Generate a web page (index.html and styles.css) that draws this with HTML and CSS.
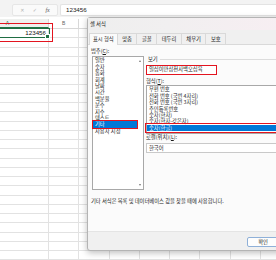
FILE: index.html
```html
<!DOCTYPE html>
<html>
<head>
    <meta charset="utf-8">
    <title>셀 서식</title>
    <link rel="stylesheet" href="styles.css">
</head>
<body>
    <div class="formula-bar">
        <div class="fx-tools">
            <span class="tool">✕</span>
            <span class="tool">✓</span>
            <span class="tool fx">fx</span>
        </div>
        <div class="formula-input">123456</div>
    </div>

    <div class="grid" id="grid">
        <div class="row head">
            <div class="cell col-a active-col">A</div>
            <div class="cell">B</div>
            <div class="cell">C</div>
            <div class="cell">D</div>
            <div class="cell">E</div>
            <div class="cell">F</div>
            <div class="cell">G</div>
            <div class="cell">H</div>
            <div class="cell">I</div>
        </div>
        <div class="row">
            <div class="cell col-a selected">123456<span class="handle"></span></div>
            <div class="cell"></div>
            <div class="cell"></div>
            <div class="cell"></div>
            <div class="cell"></div>
            <div class="cell"></div>
            <div class="cell"></div>
            <div class="cell"></div>
            <div class="cell"></div>
        </div>
    </div>

    <div class="dialog">
        <div class="title-bar">셀 서식</div>
        <div class="tabs">
            <span class="tab active">표시 형식</span>
            <span class="tab">맞춤</span>
            <span class="tab">글꼴</span>
            <span class="tab">테두리</span>
            <span class="tab">채우기</span>
            <span class="tab">보호</span>
        </div>
        <div class="panel">
            <div class="columns">
                <div class="category">
                    <div class="label">범주(<u>C</u>):</div>
                    <div class="listbox cat-list">
                        <ul class="items">
                            <li>일반</li>
                            <li>숫자</li>
                            <li>통화</li>
                            <li>회계</li>
                            <li>날짜</li>
                            <li>시간</li>
                            <li>백분율</li>
                            <li>분수</li>
                            <li>지수</li>
                            <li>텍스트</li>
                            <li class="picked">기타</li>
                            <li>사용자 지정</li>
                        </ul>
                        <div class="scrollbar">
                            <span class="arrow up"></span>
                            <span class="arrow down"></span>
                        </div>
                    </div>
                </div>
                <div class="options">
                    <div class="group-label"><span>보기</span></div>
                    <div class="sample">일십이만삼천사백오십육</div>
                    <div class="label">형식(<u>T</u>):</div>
                    <div class="listbox fmt-list">
                        <ul class="items">
                            <li>우편 번호</li>
                            <li>전화 번호 (국번 4자리)</li>
                            <li>전화 번호 (국번 3자리)</li>
                            <li>주민등록번호</li>
                            <li>숫자(한자)</li>
                            <li>숫자(한자-갖은자)</li>
                            <li class="picked">숫자(한글)</li>
                        </ul>
                    </div>
                    <div class="label">로캘(위치)(<u>L</u>):</div>
                    <div class="select">한국어</div>
                </div>
            </div>
            <p class="note">기타 서식은 목록 및 데이터베이스 값을 찾을 때에 사용합니다.</p>
        </div>
        <div class="footer">
            <button class="btn">확인</button>
        </div>
    </div>

    <script>
        // empty sheet rows below row 1
        const grid = document.getElementById('grid');
        for (let r = 0; r < 24; r++) {
            const row = document.createElement('div');
            row.className = 'row';
            for (let c = 0; c < 9; c++) {
                const cell = document.createElement('div');
                cell.className = c === 0 ? 'cell col-a' : 'cell';
                row.appendChild(cell);
            }
            grid.appendChild(row);
        }
    </script>
</body>
</html>
```

FILE: styles.css
```css
body {
    margin: 0;
    width: 276px;
    height: 260px;
    overflow: hidden;
    position: relative;
    background: #fff;
    font-family: "Noto Sans CJK KR", "Noto Sans", sans-serif;
}

/* formula bar */
.formula-bar {
    height: 17px;
    box-sizing: border-box;
    padding: 4px 0 1px 12px;
    background: #f3f3f3;
    display: flex;
    gap: 2px;
}
.fx-tools {
    width: 46px;
    display: flex;
    align-items: center;
    justify-content: space-around;
    padding: 0 3px;
    box-sizing: border-box;
    background: #fafafa;
    border: 1px solid #e6e6e6;
    border-radius: 2px;
}
.tool {
    font-family: "DejaVu Sans", sans-serif;
    font-size: 5px;
    color: #b0b0b0;
}
.tool.fx {
    font-family: "Liberation Serif", serif;
    font-style: italic;
    font-size: 6px;
    color: #555;
}
.formula-input {
    flex: 1;
    background: #fff;
    border: 1px solid #e3e3e3;
    border-right: none;
    border-radius: 2px 0 0 2px;
    padding-left: 5px;
    font-family: "Liberation Sans", sans-serif;
    font-size: 6.2px;
    line-height: 10px;
    color: #222;
}

/* sheet grid */
.grid {
    margin-top: 2px;
    margin-left: -33px;
}
.row {
    display: flex;
    height: 9.25px;
    box-sizing: border-box;
    border-bottom: 1px solid #e2e2e2;
}
.row.head {
    height: 10px;
    border-bottom: 1px solid #d8d8d8;
}
.cell {
    width: 30.25px;
    flex: none;
    box-sizing: border-box;
    border-right: 1px solid #e2e2e2;
    font-family: "Liberation Sans", sans-serif;
    font-size: 5px;
    color: #666;
    text-align: center;
    line-height: 8px;
}
.cell.col-a {
    width: 82px;
}
.head .cell {
    border-right-color: #d8d8d8;
}
.head .cell.active-col {
    color: #217346;
    background: #eef0ee;
    border-bottom: 1px solid #217346;
}
.cell.selected {
    position: relative;
    text-align: right;
    padding-right: 2px;
    font-size: 6.2px;
    line-height: 8px;
    color: #111;
    outline: 1.5px solid #1f6e43;
    outline-offset: -0.5px;
}
.cell.selected::after {
    content: "";
    position: absolute;
    left: -10px;
    right: -5px;
    top: -6px;
    bottom: -5px;
    border: 1.5px solid #e3141f;
}
.handle {
    position: absolute;
    right: -2px;
    bottom: -2px;
    width: 3px;
    height: 3px;
    background: #1f6e43;
    border: 0.5px solid #fff;
}

/* dialog */
.dialog {
    position: absolute;
    left: 87px;
    top: 17px;
    width: 200px;
    height: 234px;
    box-sizing: border-box;
    display: flex;
    flex-direction: column;
    background: #f0f0f0;
    border: 1px solid #b4b4b4;
    border-radius: 3px 0 0 3px;
    box-shadow: 0 2px 6px rgba(0, 0, 0, 0.25);
    font-size: 5.3px;
    color: #1b1b1b;
}
.title-bar {
    height: 12px;
    line-height: 12px;
    padding-left: 2px;
    background: linear-gradient(90deg, #eeeeee, #f1eff0 40%, #f7eef2);
}
.tabs {
    height: 14px;
    display: flex;
    align-items: flex-end;
    padding-left: 1px;
    background: #f0f0f0;
}
.tab {
    height: 10px;
    line-height: 10px;
    padding: 0 4.5px;
    margin-right: -1px;
    border: 1px solid #d9d9d9;
    border-bottom: none;
    background: #f0f0f0;
}
.tab.active {
    height: 11px;
    line-height: 11px;
    padding: 0 3px;
    background: #fbfbfb;
    position: relative;
    margin-bottom: -1px;
}
.panel {
    flex: 1;
    box-sizing: border-box;
    padding: 3px 0 0 3px;
    background: #fbfbfb;
    border-top: 1px solid #d9d9d9;
    border-bottom: 1px solid #e4e4e4;
}
.columns {
    display: flex;
    gap: 2px;
}
.category {
    width: 53px;
}
.label {
    height: 6.4px;
    line-height: 6.4px;
    white-space: nowrap;
}
.listbox {
    background: #fff;
    border: 1px solid #a8a8a8;
    box-sizing: border-box;
}
.items {
    list-style: none;
    margin: 0;
    padding: 0;
}
.items li {
    height: 6.4px;
    line-height: 6.4px;
    padding-left: 2px;
    white-space: nowrap;
}
.items li.picked {
    background: #0078d7;
    color: #fff;
    outline: 1.5px solid #e3141f;
    outline-offset: 0.5px;
    position: relative;
}
.cat-list {
    margin: 2px 0 0 1px;
    height: 134px;
    display: flex;
}
.cat-list .items {
    flex: 1;
}
.scrollbar {
    width: 6px;
    display: flex;
    flex-direction: column;
    justify-content: space-between;
    align-items: center;
    padding: 3px 0;
}
.arrow {
    width: 0;
    height: 0;
    border-left: 1.5px solid transparent;
    border-right: 1.5px solid transparent;
}
.arrow.up {
    border-bottom: 2px solid #777;
}
.arrow.down {
    border-top: 2px solid #777;
}
.options {
    flex: 1;
    padding-top: 8px;
}
.group-label {
    display: flex;
    align-items: center;
    gap: 2px;
    height: 6px;
    padding-left: 2px;
}
.group-label::after {
    content: "";
    flex: 1;
    border-top: 1px solid #dcdcdc;
}
.sample {
    margin-top: 3px;
    width: 71px;
    height: 10px;
    line-height: 7px;
    box-sizing: border-box;
    padding-left: 2px;
    border: 1.5px solid #e3141f;
    background: #fff;
    white-space: nowrap;
}
.options .label {
    margin-top: 3px;
}
.fmt-list {
    margin-top: 1px;
    height: 49px;
}
.fmt-list .items li.picked {
    outline-offset: 1px;
}
.fmt-list + .label {
    margin-top: 0;
}
.select {
    margin-top: 2px;
    height: 10px;
    line-height: 8px;
    box-sizing: border-box;
    padding-left: 2px;
    border: 1px solid #c9c9c9;
    background: #fff;
}
.note {
    margin: 8px 0 0;
    line-height: 6.4px;
    white-space: nowrap;
}
.footer {
    height: 18px;
    display: flex;
    justify-content: flex-end;
    align-items: flex-start;
    padding: 5px 7px 0 0;
    box-sizing: border-box;
}
.btn {
    width: 32px;
    height: 10px;
    padding: 0;
    font-family: inherit;
    font-size: 5.3px;
    line-height: 8px;
    color: #1b1b1b;
    background: #fdfdfd;
    border: 1px solid #8fb0d8;
    border-radius: 2px;
}
```
